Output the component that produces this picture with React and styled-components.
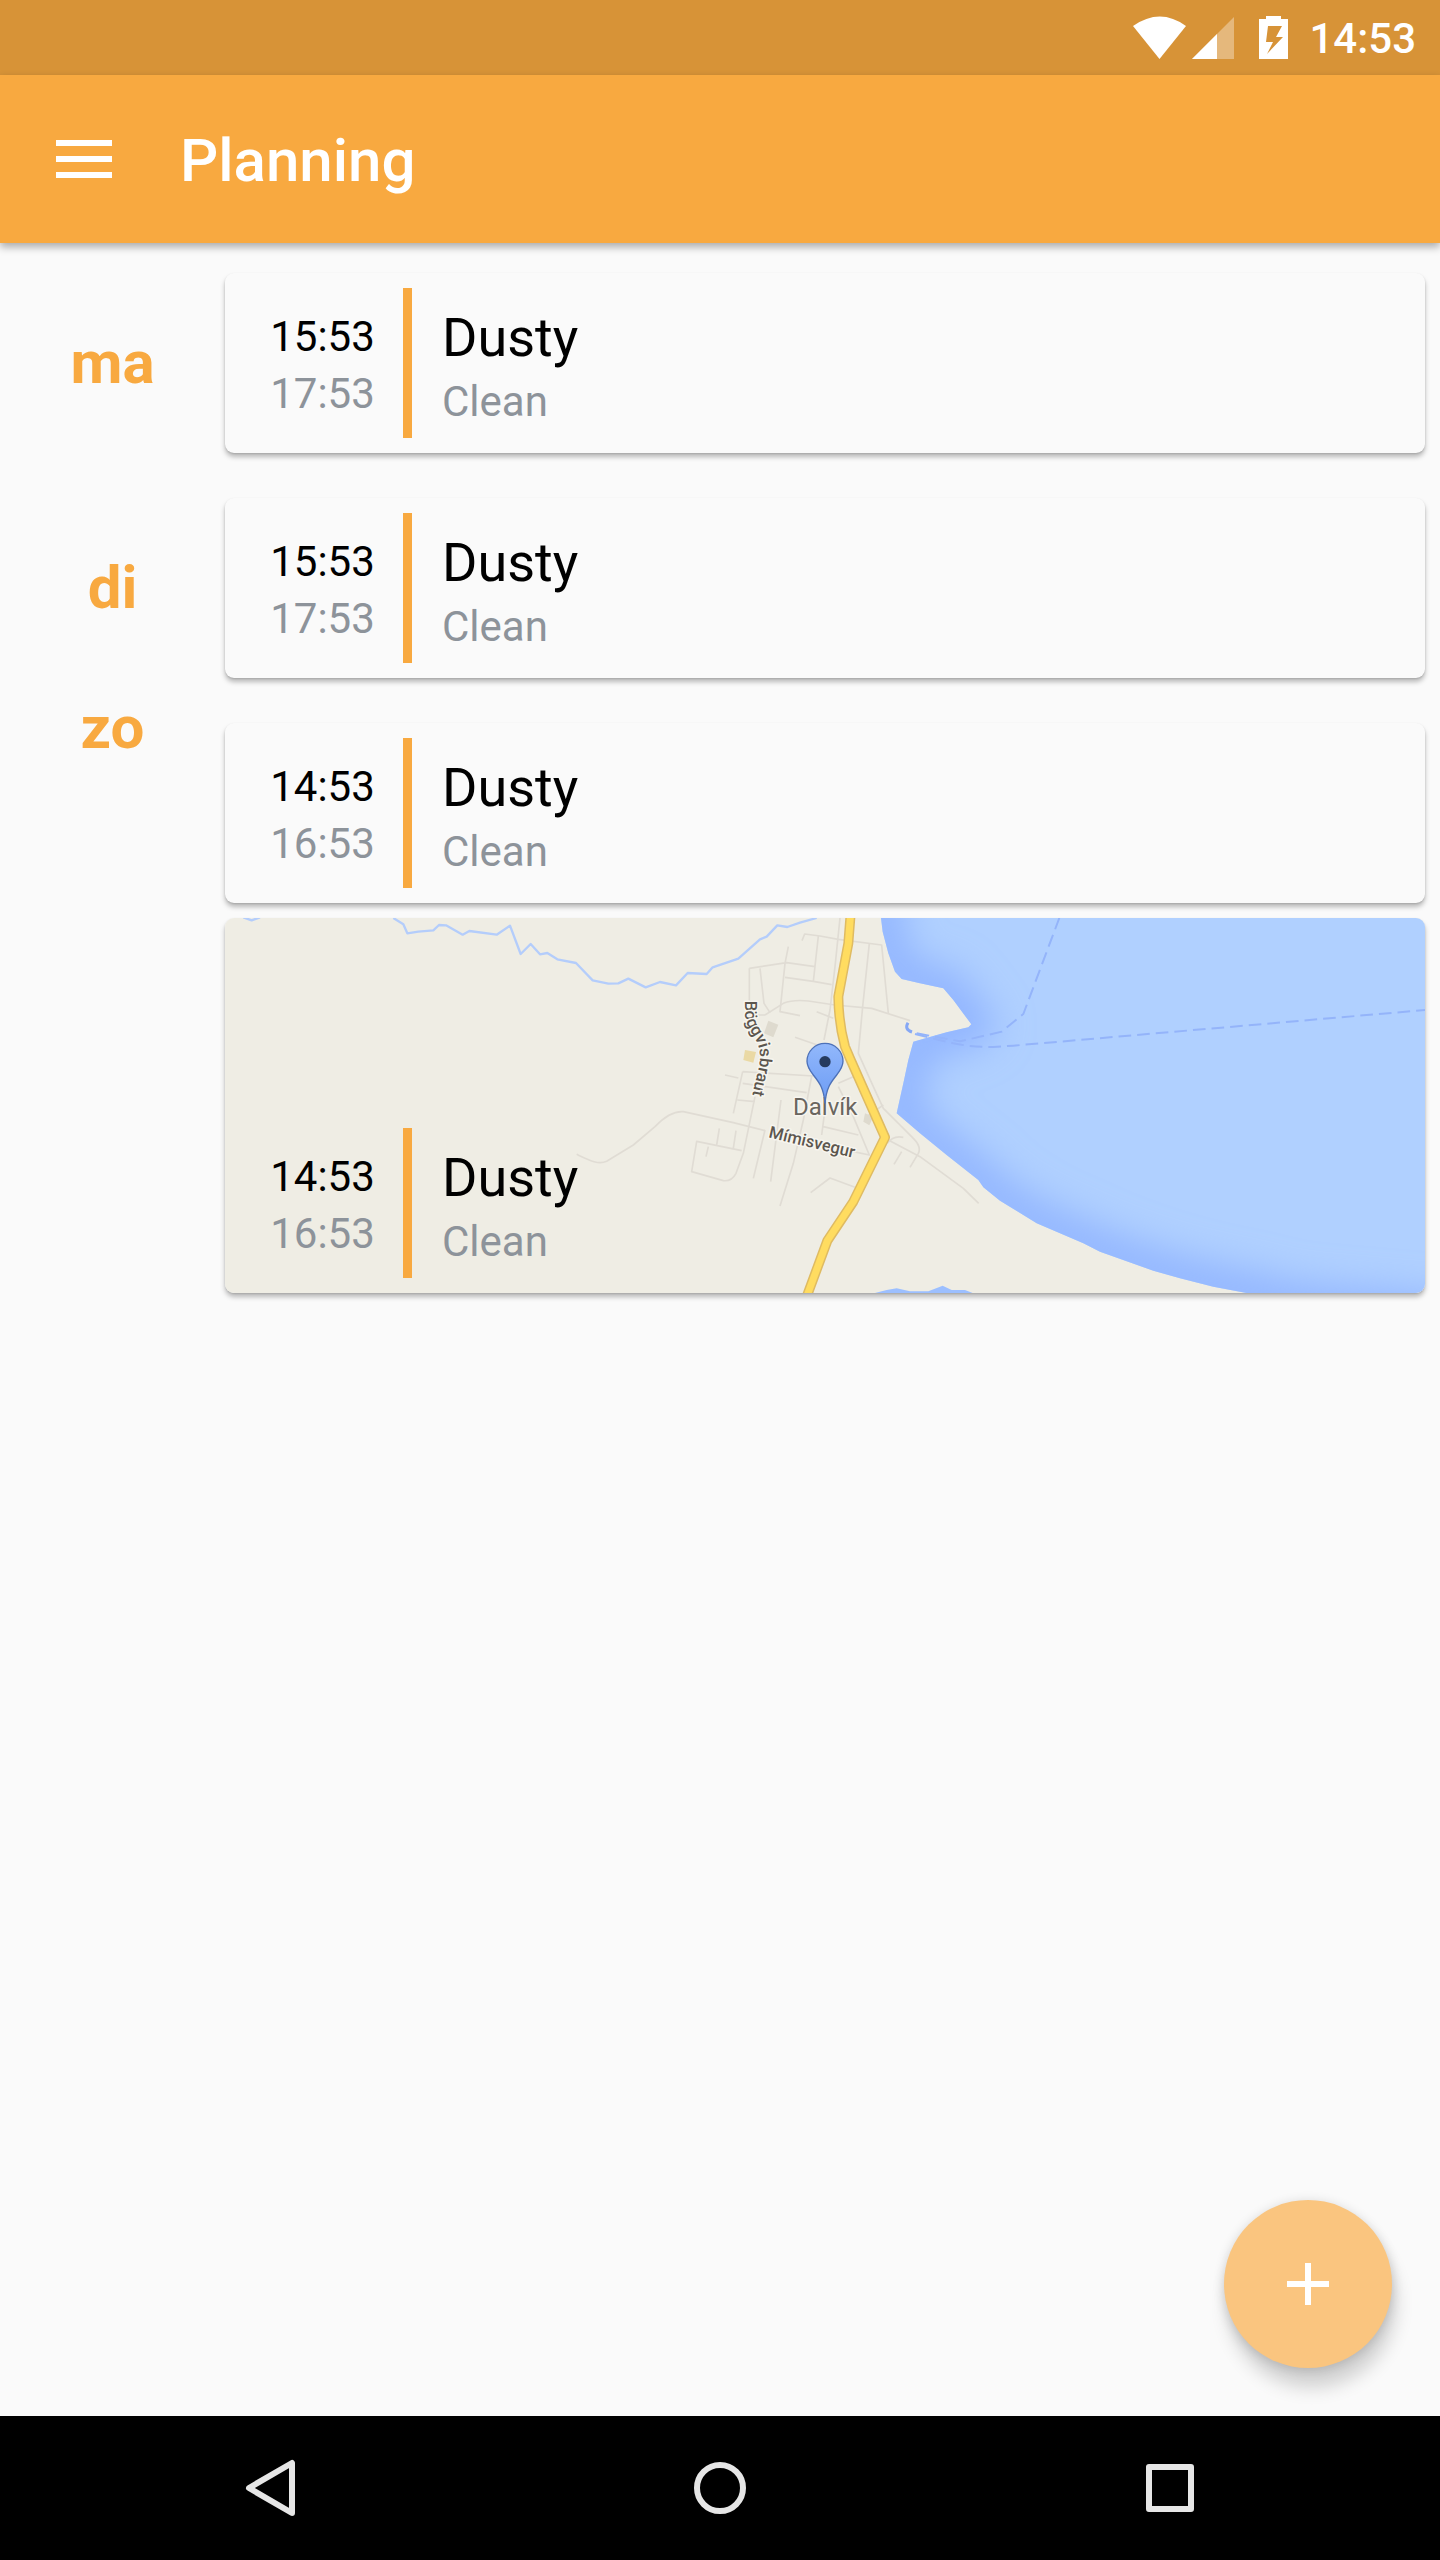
import React from "react";
import styled, { createGlobalStyle } from "styled-components";

const orange = "#f8a940";
const paper = "#fafafa";

const GlobalStyle = createGlobalStyle`
  * { box-sizing: border-box; }
  body { margin: 0; background: ${paper}; font-family: Roboto, "Liberation Sans", sans-serif; }
  button { border: 0; padding: 0; margin: 0; font: inherit; color: inherit; background: none; cursor: pointer; }
  svg { display: block; }
  h1, h2, h3, p { margin: 0; }
`;

const Screen = styled.div`
  min-height: 100vh;
  display: flex;
  flex-direction: column;
`;

const StatusBar = styled.div`
  display: flex;
  align-items: center;
  justify-content: flex-end;
  height: 75px;
  padding: 2px 24px 0 0;
  background: #d79337;
  color: #fff;
`;

const StatusIcons = styled.svg`
  width: 156px;
  height: 45px;
`;

const Clock = styled.time`
  margin-left: 20px;
  font-size: 42px;
  font-weight: 500;
  line-height: 50px;
`;

const AppBar = styled.header`
  display: flex;
  align-items: center;
  gap: 68px;
  height: 168px;
  padding: 0 56px;
  background: ${orange};
  color: #fff;
  z-index: 1;
  box-shadow: 0 4px 8px rgba(0, 0, 0, 0.32);
`;

const MenuButton = styled.button`
  display: flex;
  flex-direction: column;
  gap: 10px;
  width: 56px;
`;

const MenuLine = styled.span`
  height: 6px;
  background: #fff;
`;

const Title = styled.h1`
  padding-top: 4px;
  font-size: 60px;
  font-weight: 500;
  line-height: 72px;
`;

const Agenda = styled.main`
  flex: 1;
  position: relative;
`;

const DayRow = styled.section`
  display: flex;
  padding-right: 15px;
`;

const DayName = styled.h2`
  width: 225px;
  padding-top: ${(p) => (p.$pinned ? 0 : 85)}px;
  text-align: center;
  font-size: 60px;
  font-weight: 700;
  line-height: 70px;
  color: ${orange};
`;

const Cards = styled.div`
  flex: 1;
  display: flex;
  flex-direction: column;
  gap: 15px;
  padding: 30px 0 15px;
`;

const Card = styled.article`
  position: relative;
  display: flex;
  align-items: flex-end;
  min-height: ${(p) => (p.$tall ? 375 : 180)}px;
  padding: 15px;
  border-radius: 9px;
  overflow: hidden;
  background: ${paper};
  box-shadow: 0 4px 5px rgba(0, 0, 0, 0.26), 0 1px 2px rgba(0, 0, 0, 0.12);
`;

const Entry = styled.div`
  position: relative;
  display: flex;
  height: 150px;
`;

const Times = styled.div`
  width: 163px;
  padding: 20px 0 0 2px;
  text-align: center;
`;

const Time = styled.time`
  display: block;
  font-size: 42px;
  line-height: 57px;
  color: ${(p) => (p.$muted ? "#8d939a" : "#000")};
`;

const Divider = styled.div`
  width: 9px;
  background: ${orange};
`;

const Details = styled.div`
  display: flex;
  flex-direction: column;
  gap: 4px;
  padding: 20px 0 0 30px;
`;

const Name = styled.h3`
  font-size: 54px;
  font-weight: 400;
  line-height: 60px;
  color: #000;
`;

const Task = styled.p`
  font-size: 42px;
  line-height: 60px;
  color: #8d939a;
`;

const MapCanvas = styled.svg`
  position: absolute;
  inset: 0;
  width: 100%;
  height: 100%;
`;

const AddButton = styled.button`
  position: absolute;
  right: 48px;
  bottom: 48px;
  width: 168px;
  height: 168px;
  display: grid;
  place-items: center;
  border-radius: 50%;
  background: #fac57f;
  box-shadow: 4px 20px 18px rgba(0, 0, 0, 0.16), 0 2px 12px rgba(0, 0, 0, 0.16);
`;

const NavBar = styled.nav`
  display: flex;
  height: 144px;
  padding: 0 45px;
  background: #000;
`;

const NavButton = styled.button`
  flex: 1;
  display: grid;
  place-items: center;
`;

const NavIcon = ({ children }) => (
  <svg width="60" height="60" viewBox="0 0 60 60" fill="none" stroke="#e6e6e6" strokeWidth="6" strokeLinejoin="round">
    {children}
  </svg>
);

const coast =
  "M840 -40L843 54L848 95L865 160L885 215L905 237L960 250L1030 265L1060 300L1114 373L1105 382L1040 397L1000 408L940 425L925 480L910 550L890 640L960 700L1040 765L1135 840L1150 862L1200 902L1310 970L1450 1030L1500 1055L1660 1112L1740 1135L1840 1160L1945 1180L2080 1215L2600 1260";

function TownMap() {
  return (
    <MapCanvas viewBox="-1125 54 3600 1125" preserveAspectRatio="xMidYMid slice" role="img" aria-label="Dalvík">
      <defs>
        <clipPath id="bay">
          <path d={`${coast}V-40Z`} />
        </clipPath>
        <filter id="shallow" x="-20%" y="-20%" width="140%" height="140%">
          <feGaussianBlur stdDeviation="55" />
        </filter>
        <linearGradient id="pinFill" x1="0" y1="0" x2="0" y2="1">
          <stop offset="0" stopColor="#92b8fb" />
          <stop offset="1" stopColor="#6b9bf5" />
        </linearGradient>
        <path id="streetA" d="M434 302V335C436 395 474 405 480 462C482 505 461 545 452 620" />
        <path id="streetB" d="M504 712L780 778" />
      </defs>
      <rect x="-1125" y="54" width="3600" height="1125" fill="#efede4" />

      <g clipPath="url(#bay)">
        <rect x="800" y="0" width="1700" height="1200" fill="#b0d0ff" />
        <path d={coast} fill="none" stroke="#92b5ff" strokeWidth="130" filter="url(#shallow)" />
      </g>
      <path d="M825 1179L860 1170L890 1165L930 1174L985 1174L1028 1157L1055 1170L1095 1170L1118 1179Z" fill="#9cbfff" />

      <g fill="none" stroke="#b4cdfb" strokeWidth="7" strokeLinejoin="round">
        <path d="M-1070 52L-1045 61L-1020 52" />
        <path d="M-620 54L-590 73L-578 100L-545 95L-500 91L-483 75L-462 76L-412 104L-392 93L-310 104L-270 77L-238 162L-208 132L-180 163L-158 159L-128 178L-72 189L-22 241L25 251L55 250L85 236L137 262L180 246L228 256L263 219L320 222L338 202L415 176L480 118L500 110L532 76L562 81L600 68L650 54" />
      </g>

      <g fill="none" stroke="#e0dcd4" strokeWidth="5" strokeLinejoin="round">
        <path d="M-70 763C-30 782 -5 795 20 784L100 735L165 680Q210 632 250 635L400 668L495 692" />
        <path d="M720 54L705 200L690 330L672 420" />
        <path d="M606 122L614 102L660 108L715 118L845 135L865 340" />
        <path d="M655 108L640 244M565 140L555 190L540 335L600 347M448 205L560 188L645 200M448 205L448 300L465 345L495 345M480 205L492 310L510 338M555 232L640 244L695 254" />
        <path d="M495 345L550 310Q580 298 625 303L705 315L815 325L930 362" />
        <path d="M808 130L788 320L775 460L820 560L850 625L900 675L940 715Q965 740 955 760L930 802" />
        <path d="M585 412L650 434M650 335L700 355M375 525L415 534M428 515L400 640M428 515L640 528M428 550L620 578M412 600L465 605M465 590L430 760L408 820Q395 845 370 842L275 815L290 724L425 752M358 685L350 735M408 692L400 745M325 740L318 770" />
        <path d="M543 600L512 845M495 690L460 835M635 528L610 660L580 790L540 918M680 590L665 705M670 680L775 705M715 560L760 650L808 765L760 755M715 550L760 530" />
        <path d="M632 878L690 834L765 862M865 720L960 770L1090 865L1136 910M905 755L882 793M862 730Q880 705 910 712M800 650L850 615" />
      </g>
      <path d="M505 362L535 374L520 412L492 400Z" fill="#dedace" />
      <path d="M435 450L468 456L460 488L430 480Z" fill="#ead9a4" />
      <path d="M795 640L820 650L808 676L790 665Z" fill="#dedace" />

      <g fill="none" strokeLinejoin="round">
        <path d="M752 40L745 130L715 290Q716 370 735 440L752 480L855 712L760 905L682 1022L620 1190" stroke="#dfbb62" strokeWidth="30" />
        <path d="M752 40L745 130L715 290Q716 370 735 440L752 480L855 712L760 905L682 1022L620 1190" stroke="#ffdc60" strokeWidth="21" />
      </g>

      <g fill="none" stroke="#94b4fa" strokeWidth="6">
        <path d="M924 368Q912 388 936 396" stroke="#86a8f5" strokeWidth="9" />
        <path d="M945 402L1060 430Q1120 442 1180 441L1240 437L2475 330" strokeDasharray="38 18" />
        <path d="M950 400L1080 424L1205 395L1270 342L1378 54" strokeDasharray="38 18" />
      </g>

      <g fontFamily="Roboto, sans-serif" fill="#5c564e" stroke="#f7f5ef" strokeWidth="9" paintOrder="stroke" strokeLinejoin="round">
        <text fontSize="50" fontWeight="500"><textPath href="#streetA">Böggvisbraut</textPath></text>
        <text fontSize="50" fontWeight="500"><textPath href="#streetB">Mímisvegur</textPath></text>
        <text x="579" y="646" fontSize="72" fill="#6a665f">Dalvík</text>
      </g>

      <path
        d="M675 610C671 565 660 550 640 525C628 510 621 500 621 484A54 54 0 0 1 729 484C729 500 722 510 710 525C690 550 679 565 675 610Z"
        fill="url(#pinFill)"
        stroke="#4d71b8"
        strokeWidth="4"
      />
      <circle cx="675" cy="485" r="17" fill="#263b5e" />
    </MapCanvas>
  );
}

const days = [
  { name: "ma", items: [{ from: "15:53", to: "17:53" }] },
  { name: "di", items: [{ from: "15:53", to: "17:53" }] },
  { name: "zo", pinned: true, items: [{ from: "14:53", to: "16:53" }, { from: "14:53", to: "16:53", map: true }] },
];

function Appointment({ item }) {
  return (
    <Card $tall={item.map}>
      {item.map && <TownMap />}
      <Entry>
        <Times>
          <Time>{item.from}</Time>
          <Time $muted>{item.to}</Time>
        </Times>
        <Divider />
        <Details>
          <Name>Dusty</Name>
          <Task>Clean</Task>
        </Details>
      </Entry>
    </Card>
  );
}

export default function App() {
  return (
    <Screen>
      <GlobalStyle />
      <StatusBar>
        <StatusIcons viewBox="0 0 156 45" fill="#fff" aria-hidden="true">
          <path d="M0 10Q27 -9 53 10L26.500 43Z" />
          <path d="M101 1V43H59Z" opacity=".35" />
          <path d="M84 18V43H59Z" />
          <path
            fillRule="evenodd"
            d="M133 -1H148V3H155V43H126V3H133ZM135 10L133 26H140L134 38L150 21H143L149 10Z"
          />
        </StatusIcons>
        <Clock>14:53</Clock>
      </StatusBar>
      <AppBar>
        <MenuButton aria-label="Menu">
          <MenuLine />
          <MenuLine />
          <MenuLine />
        </MenuButton>
        <Title>Planning</Title>
      </AppBar>
      <Agenda>
        {days.map((day) => (
          <DayRow key={day.name}>
            <DayName $pinned={day.pinned}>{day.name}</DayName>
            <Cards>
              {day.items.map((item, i) => (
                <Appointment key={i} item={item} />
              ))}
            </Cards>
          </DayRow>
        ))}
        <AddButton aria-label="Add">
          <svg width="42" height="42" viewBox="0 0 42 42" fill="none" stroke="#fff" strokeWidth="6">
            <path d="M21 0V42M0 21H42" />
          </svg>
        </AddButton>
      </Agenda>
      <NavBar>
        <NavButton aria-label="Back">
          <NavIcon><path d="M52 5V55L9 30Z" /></NavIcon>
        </NavButton>
        <NavButton aria-label="Home">
          <NavIcon><circle cx="30" cy="30" r="23" /></NavIcon>
        </NavButton>
        <NavButton aria-label="Recent apps">
          <NavIcon><rect x="9" y="9" width="42" height="42" /></NavIcon>
        </NavButton>
      </NavBar>
    </Screen>
  );
}
